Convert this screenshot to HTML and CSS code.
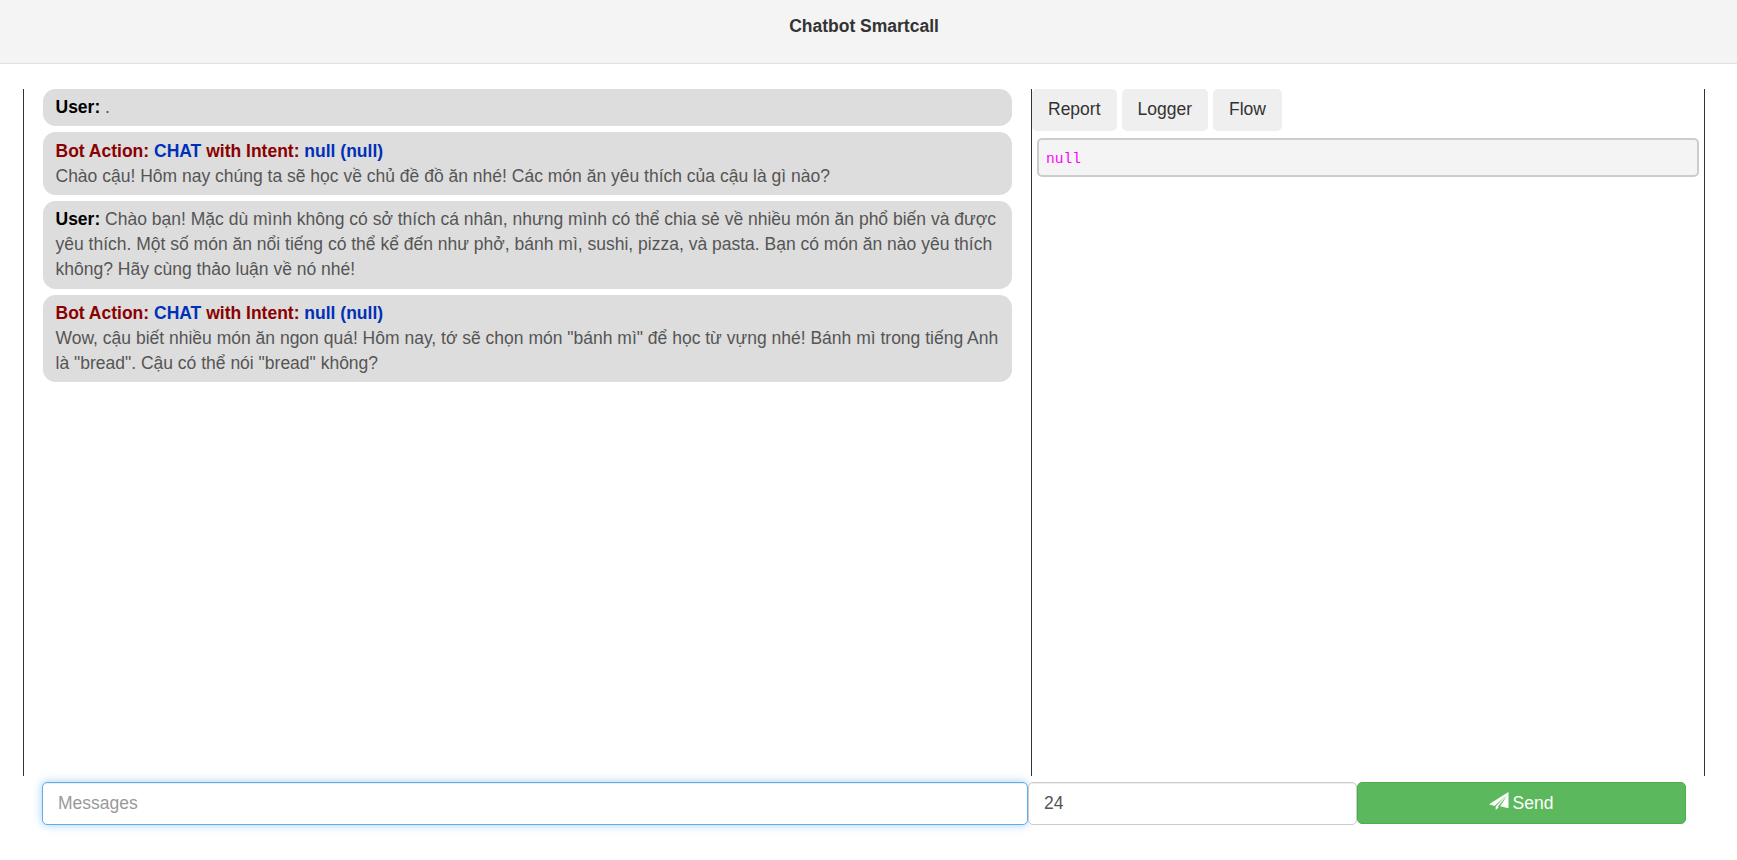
FILE: index.html
```html
<!DOCTYPE html>
<html lang="vi">
<head>
<meta charset="utf-8">
<title>Chatbot Smartcall</title>
<link rel="stylesheet" href="styles.css">
</head>
<body>
<header class="topbar"><strong>Chatbot Smartcall</strong></header>
<main class="panels">
  <section class="chat">
    <div class="message"><b class="user">User:</b> .</div>
    <div class="message"><b class="bot">Bot Action: <span class="value">CHAT</span> with Intent: <span class="value">null (null)</span></b><br>Chào cậu! Hôm nay chúng ta sẽ học về chủ đề đồ ăn nhé! Các món ăn yêu thích của cậu là gì nào?</div>
    <div class="message"><b class="user">User:</b> Chào bạn! Mặc dù mình không có sở thích cá nhân, nhưng mình có thể chia sẻ về nhiều món ăn phổ biến và được yêu thích. Một số món ăn nổi tiếng có thể kể đến như phở, bánh mì, sushi, pizza, và pasta. Bạn có món ăn nào yêu thích không? Hãy cùng thảo luận về nó nhé!</div>
    <div class="message"><b class="bot">Bot Action: <span class="value">CHAT</span> with Intent: <span class="value">null (null)</span></b><br>Wow, cậu biết nhiều món ăn ngon quá! Hôm nay, tớ sẽ chọn món "bánh mì" để học từ vựng nhé! Bánh mì trong tiếng Anh là "bread". Cậu có thể nói "bread" không?</div>
  </section>
  <section class="inspector">
    <nav class="tabs">
      <button class="tab">Report</button>
      <button class="tab">Logger</button>
      <button class="tab">Flow</button>
    </nav>
    <pre class="output">null</pre>
  </section>
</main>
<form class="composer">
  <input class="field field-focus" type="text" placeholder="Messages">
  <input class="field" type="text" value="24">
  <button class="send" type="button"><svg class="plane" viewBox="0 0 20 18"><path d="M19.5 0 0 12.2 5.4 14 17.3 3.5 6.7 14.5V18L9.7 15.4 8.8 14.7 18.3 3.2 11.2 14.2 19.5 16.2Z"/></svg><span>Send</span></button>
</form>
</body>
</html>
```
FILE: styles.css
```css
* { box-sizing: border-box; }
body {
  margin: 0;
  height: 860px;
  overflow: hidden;
  background: #fff;
  color: #333;
  font: 17.5px/25px "Liberation Sans", Arial, sans-serif;
}
.topbar {
  height: 64px;
  padding: 14px 9px 0 0;
  background: #f4f4f4;
  border-bottom: 1px solid #e0e0e0;
  text-align: center;
}
.panels {
  display: grid;
  grid-template-columns: 1008px 674px;
  height: 687px;
  margin: 25px 0 0 23px;
}
.chat {
  display: flex;
  flex-direction: column;
  gap: 6px;
  padding: 0 19px;
  border-left: 1px solid #333;
}
.message {
  padding: 6px 12.5px;
  background: #ddd;
  border-radius: 12.5px;
  color: #555;
}
.message:nth-child(2) { padding-top: 7px; }
.message:nth-child(3) { padding-bottom: 7px; }
.user { color: #000; }
.bot { color: #8b0000; }
.value { color: #0030b8; }
.inspector {
  border-left: 1px solid #333;
  border-right: 1px solid #333;
}
.tabs { display: flex; gap: 5px; }
.tab {
  height: 42px;
  padding: 0 16px 1px;
  border: 0;
  border-radius: 5px;
  background: #efefef;
  color: #333;
  font: inherit;
}
.output {
  height: 39px;
  margin: 7px 5px 0;
  padding: 8px 7px 0;
  border: 2px solid #ccc;
  border-radius: 5px;
  background: #f4f4f4;
  color: #f0f;
  font: 14.6px/23px "Liberation Mono", monospace;
}
.composer {
  display: grid;
  grid-template-columns: 986px 329px 329px;
  align-items: start;
  margin: 6px 0 0 42px;
}
.field {
  width: 100%;
  height: 43px;
  padding: 0 15px 1px;
  border: 1px solid #ccc;
  border-radius: 5px;
  box-shadow: inset 0 1px 1px rgba(0,0,0,.075);
  background: #fff;
  color: #555;
  font: inherit;
  outline: 0;
}
.field::placeholder { color: #999; }
.field-focus {
  border-color: #5eaeee;
  box-shadow: inset 0 1px 1px rgba(0,0,0,.075), 0 0 10px rgba(102,175,233,.6);
}
.send {
  display: flex;
  align-items: center;
  justify-content: center;
  gap: 4px;
  height: 42px;
  padding: 1px 1px 0 0;
  border: 1px solid #4cae4c;
  border-radius: 5px;
  background: #5cb85c;
  color: #fff;
  font: inherit;
}
.plane { width: 20px; height: 18px; margin-top: -5px; fill: #fff; }
```
